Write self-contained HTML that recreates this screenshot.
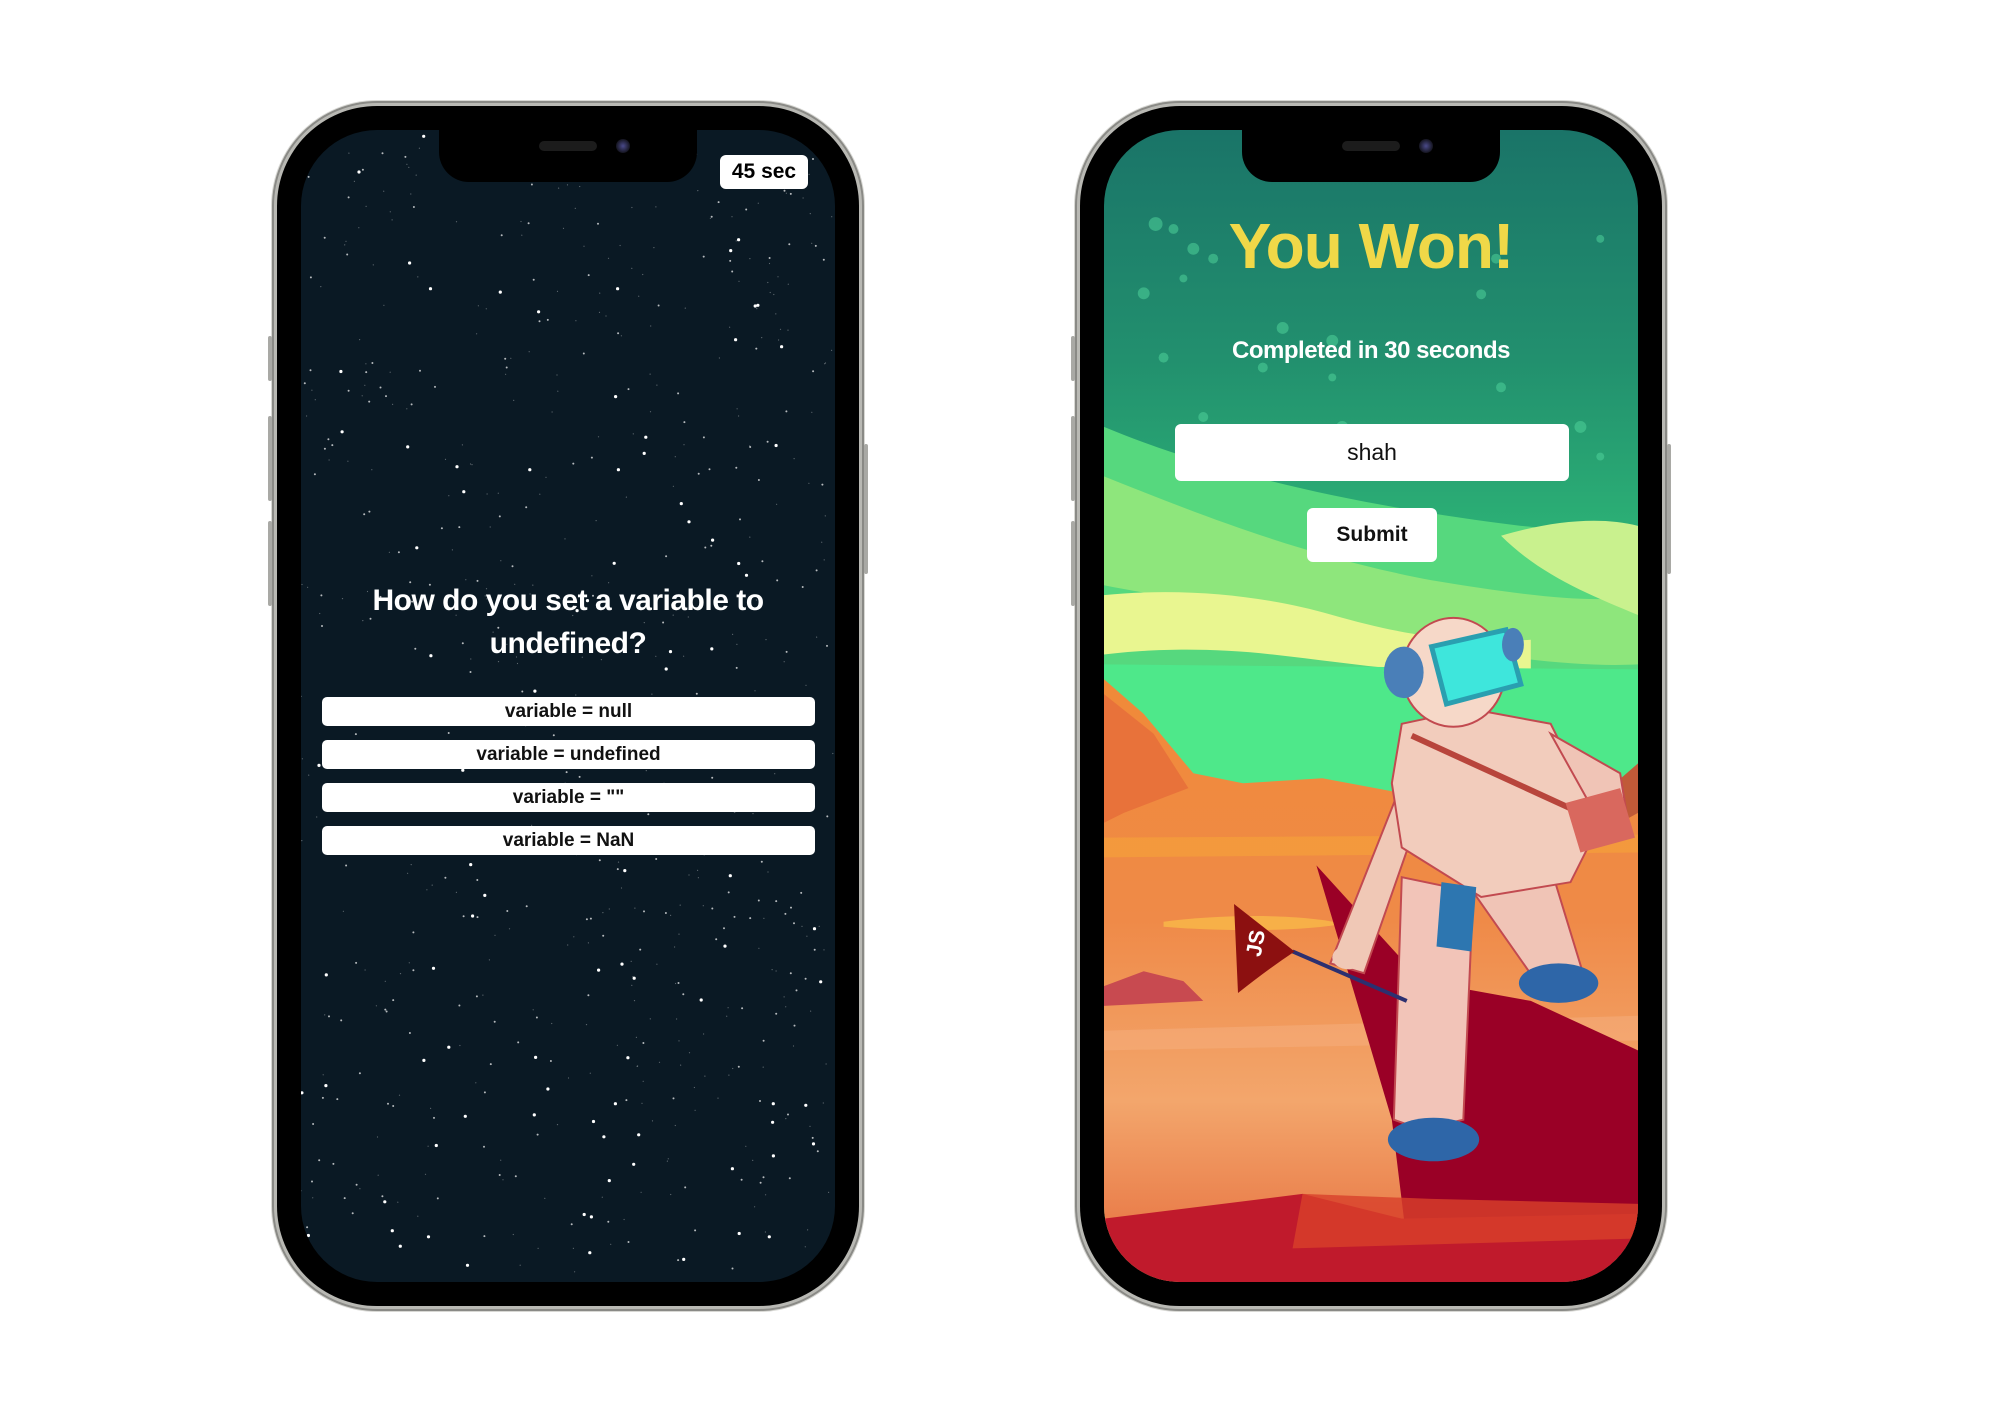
<!DOCTYPE html>
<html><head><meta charset="utf-8"><style>
html,body{margin:0;padding:0;width:2000px;height:1414px;background:#fff;overflow:hidden;font-family:"Liberation Sans",sans-serif}
.phone{position:absolute;top:106px;width:582px;height:1200px;border-radius:100px;background:#000;box-shadow:0 0 0 3px #b9b9b4,0 0 0 5px #8a8a86,0 0 0 6px #d8d8d4}
.btn{position:absolute;background:#a9a9a5;border-radius:2px}
.screen{position:absolute;left:24px;top:24px;width:534px;height:1152px;border-radius:76px;overflow:hidden}
.notch{position:absolute;left:138px;top:0;width:258px;height:52px;background:#000;border-radius:0 0 30px 30px}
.notch:before{content:"";position:absolute;left:100px;top:11px;width:58px;height:10px;border-radius:5px;background:#1c1c1c}
.notch:after{content:"";position:absolute;left:177px;top:9px;width:14px;height:14px;border-radius:50%;background:radial-gradient(#4a4a8a,#151520 70%)}
.b{font-weight:bold}
.opt{height:29px;background:#fff;border-radius:5px;margin-bottom:14px;text-align:center;font-size:19px;line-height:29px;color:#111;font-weight:bold}
</style></head><body>

<!-- LEFT PHONE -->
<div class="phone" style="left:277px">
  <div class="btn" style="left:-9px;top:230px;width:4px;height:45px"></div>
  <div class="btn" style="left:-9px;top:310px;width:4px;height:85px"></div>
  <div class="btn" style="left:-9px;top:415px;width:4px;height:85px"></div>
  <div class="btn" style="left:587px;top:338px;width:4px;height:130px"></div>
  <div class="screen" style="background:#0a1924">
    <svg id="stars" width="534" height="1152" style="position:absolute;left:0;top:0"></svg>
    <div class="notch"></div>
    <div class="b" style="position:absolute;left:419px;top:25px;width:88px;height:34px;background:#fff;border-radius:6px;font-size:21px;line-height:34px;text-align:center;color:#000">45 sec</div>
    <div class="b" style="position:absolute;left:0;top:449px;width:534px;text-align:center;color:#fff;font-size:30px;line-height:43px;letter-spacing:-0.5px">How do you set a variable to<br>undefined?</div>
    <div style="position:absolute;left:21px;top:567px;width:493px">
      <div class="opt">variable = null</div>
      <div class="opt">variable = undefined</div>
      <div class="opt">variable = ""</div>
      <div class="opt">variable = NaN</div>
    </div>
  </div>
</div>

<!-- RIGHT PHONE -->
<div class="phone" style="left:1080px">
  <div class="btn" style="left:-9px;top:230px;width:4px;height:45px"></div>
  <div class="btn" style="left:-9px;top:310px;width:4px;height:85px"></div>
  <div class="btn" style="left:-9px;top:415px;width:4px;height:85px"></div>
  <div class="btn" style="left:587px;top:338px;width:4px;height:130px"></div>
  <div class="screen">
    <svg width="534" height="1152" viewBox="0 0 538 1164" preserveAspectRatio="none" style="position:absolute;left:0;top:0">
      <defs>
        <linearGradient id="sky" x1="0" y1="0" x2="0" y2="1">
          <stop offset="0" stop-color="#1a7468"/>
          <stop offset="0.2" stop-color="#22906e"/>
          <stop offset="0.4" stop-color="#2fbb78"/>
          <stop offset="0.6" stop-color="#5fe08a"/>
        </linearGradient>
        <linearGradient id="ground" x1="0" y1="0" x2="0" y2="1">
          <stop offset="0" stop-color="#f08a38"/>
          <stop offset="0.4" stop-color="#ef8a48"/>
          <stop offset="0.7" stop-color="#f3a66c"/>
          <stop offset="1" stop-color="#e56a3a"/>
        </linearGradient>
      </defs>
      <rect width="538" height="1164" fill="url(#sky)"/>
      <g fill="#4fd29a" opacity="0.55">
        <circle cx="52" cy="95" r="7"/><circle cx="70" cy="100" r="5"/><circle cx="90" cy="120" r="6"/><circle cx="110" cy="130" r="5"/><circle cx="80" cy="150" r="4"/><circle cx="40" cy="165" r="6"/><circle cx="180" cy="200" r="6"/><circle cx="230" cy="213" r="6"/><circle cx="160" cy="240" r="5"/><circle cx="230" cy="250" r="4"/><circle cx="395" cy="130" r="5"/><circle cx="380" cy="166" r="5"/><circle cx="400" cy="260" r="5"/><circle cx="500" cy="110" r="4"/><circle cx="480" cy="300" r="6"/><circle cx="500" cy="330" r="4"/><circle cx="60" cy="230" r="5"/><circle cx="100" cy="290" r="5"/><circle cx="240" cy="300" r="6"/><circle cx="130" cy="330" r="4"/>
      </g>
      <!-- green swirls -->
      <path d="M0 300 C120 350 260 380 420 400 C480 405 520 420 538 430 L538 620 L0 620 Z" fill="#56d87e"/>
      <path d="M0 350 C100 390 200 430 330 455 C420 470 500 480 538 470 L538 540 C440 545 300 515 200 495 C120 480 50 470 0 460 Z" fill="#8ee67c"/>
      <path d="M400 410 C450 395 500 390 538 400 L538 490 C490 470 440 450 400 410Z" fill="#c9f18e"/>
      <path d="M0 470 C80 462 160 470 230 490 C300 510 360 520 430 515 L430 545 C340 555 260 540 170 530 C100 522 40 525 0 530 Z" fill="#e9f690"/>
      <path d="M0 540 L538 545 L538 680 L0 680 Z" fill="#4ee88a"/>
      <!-- mountains -->
      <path d="M0 555 L40 590 L90 650 L140 660 L220 655 L300 670 L380 680 L538 690 L538 1164 L0 1164 Z" fill="url(#ground)"/>
      <path d="M0 570 L50 610 L85 665 L20 690 L0 700Z" fill="#e8723a"/>
      <path d="M0 715 L538 712 L538 730 L0 735Z" fill="#f5a03a" opacity="0.7"/>
      <path d="M60 800 C120 792 200 792 240 802 C200 810 120 810 60 805Z" fill="#f7b048"/>
      <path d="M0 910 L538 895 L538 920 L0 930Z" fill="#f6b080" opacity="0.5"/>
      <path d="M0 865 L40 850 L80 860 L100 880 L0 885Z" fill="#c84a50"/>
      <!-- red cliff -->
      <path d="M214 743 L320 860 L430 880 L538 930 L538 1164 L310 1164 L290 1000Z" fill="#9a0026"/>
      <path d="M538 640 L515 660 L520 700 L538 690Z" fill="#c05a38"/>
      <!-- bottom -->
      <path d="M0 1100 L200 1075 L300 1100 L538 1095 L538 1164 L0 1164Z" fill="#c01a2c"/>
      <path d="M200 1075 L330 1080 L538 1085 L538 1120 L190 1130Z" fill="#d8402a" opacity="0.8"/>
      <!-- astronaut -->
      <g stroke="#c24a50" stroke-width="2">
        <path d="M300 660 L322 680 L262 852 L228 842Z" fill="#f0c8b6"/>
        <path d="M300 755 L372 770 L362 1000 L320 1010 L292 1000Z" fill="#f2c4b8"/>
        <path d="M372 770 L450 745 L482 850 L442 870Z" fill="#f0c4b6"/>
        <path d="M300 600 L370 585 L450 600 L500 700 L470 760 L380 775 L300 725 L290 660Z" fill="#f2ccbc"/>
        <path d="M450 610 L520 650 L528 700 L500 700Z" fill="#f0c4b6"/>
        <ellipse cx="352" cy="548" rx="52" ry="55" fill="#f6d8c8"/>
      </g>
      <path d="M340 760 L375 765 L370 830 L335 825Z" fill="#2d76b0"/>
      <path d="M330 522 L405 505 L420 560 L345 580Z" fill="#3ee6dc" stroke="#2a9fb0" stroke-width="5"/>
      <ellipse cx="302" cy="548" rx="20" ry="26" fill="#4a7fb8"/>
      <ellipse cx="412" cy="520" rx="11" ry="17" fill="#4a7fb8"/>
      <path d="M310 612 L480 690" stroke="#b8453c" stroke-width="6"/>
      <path d="M465 680 L520 665 L535 715 L480 730Z" fill="#d9685e"/>
      <ellipse cx="332" cy="1020" rx="46" ry="22" fill="#2e66a8"/>
      <ellipse cx="458" cy="862" rx="40" ry="20" fill="#2e66a8"/>
      <path d="M190 830 L305 880" stroke="#2c3070" stroke-width="4"/>
      <ellipse cx="246" cy="836" rx="16" ry="12" fill="#f0c8b6"/>
      <path d="M131 782 L192 830 Q165 848 135 872Z" fill="#8c1010"/>
      <text x="145" y="835" transform="rotate(-80 152 828)" fill="#fff" font-family="Liberation Sans" font-size="22" font-weight="bold">JS</text>
    </svg>
    <div class="notch"></div>
    <div class="b" style="position:absolute;left:0;top:78px;width:534px;text-align:center;color:#f0d848;font-size:64px;line-height:76px;letter-spacing:-1px">You Won!</div>
    <div class="b" style="position:absolute;left:0;top:206px;width:534px;text-align:center;color:#fff;font-size:24px;line-height:30px;letter-spacing:-0.5px">Completed in 30 seconds</div>
    <div style="position:absolute;left:71px;top:294px;width:394px;height:57px;background:#fff;border-radius:6px;text-align:center;font-size:23px;line-height:57px;color:#111">shah</div>
    <div class="b" style="position:absolute;left:203px;top:378px;width:130px;height:54px;background:#fff;border-radius:6px;text-align:center;font-size:21px;line-height:54px;color:#111">Submit</div>
  </div>
</div>

<script>
(function(){var s=document.getElementById('stars'),seed=7,h='';
function r(){seed=(seed*16807)%2147483647;return seed/2147483647;}
for(var i=0;i<700;i++){var x=r()*534,y=r()*1152,big=r();var rad=big>0.85?1.6:big>0.5?1.0:0.6;var op=big>0.85?1:big>0.5?0.7:0.35;
h+='<circle cx="'+x.toFixed(1)+'" cy="'+y.toFixed(1)+'" r="'+rad+'" fill="#fff" opacity="'+op+'"/>';}
s.innerHTML=h;})();
</script>
</body></html>
